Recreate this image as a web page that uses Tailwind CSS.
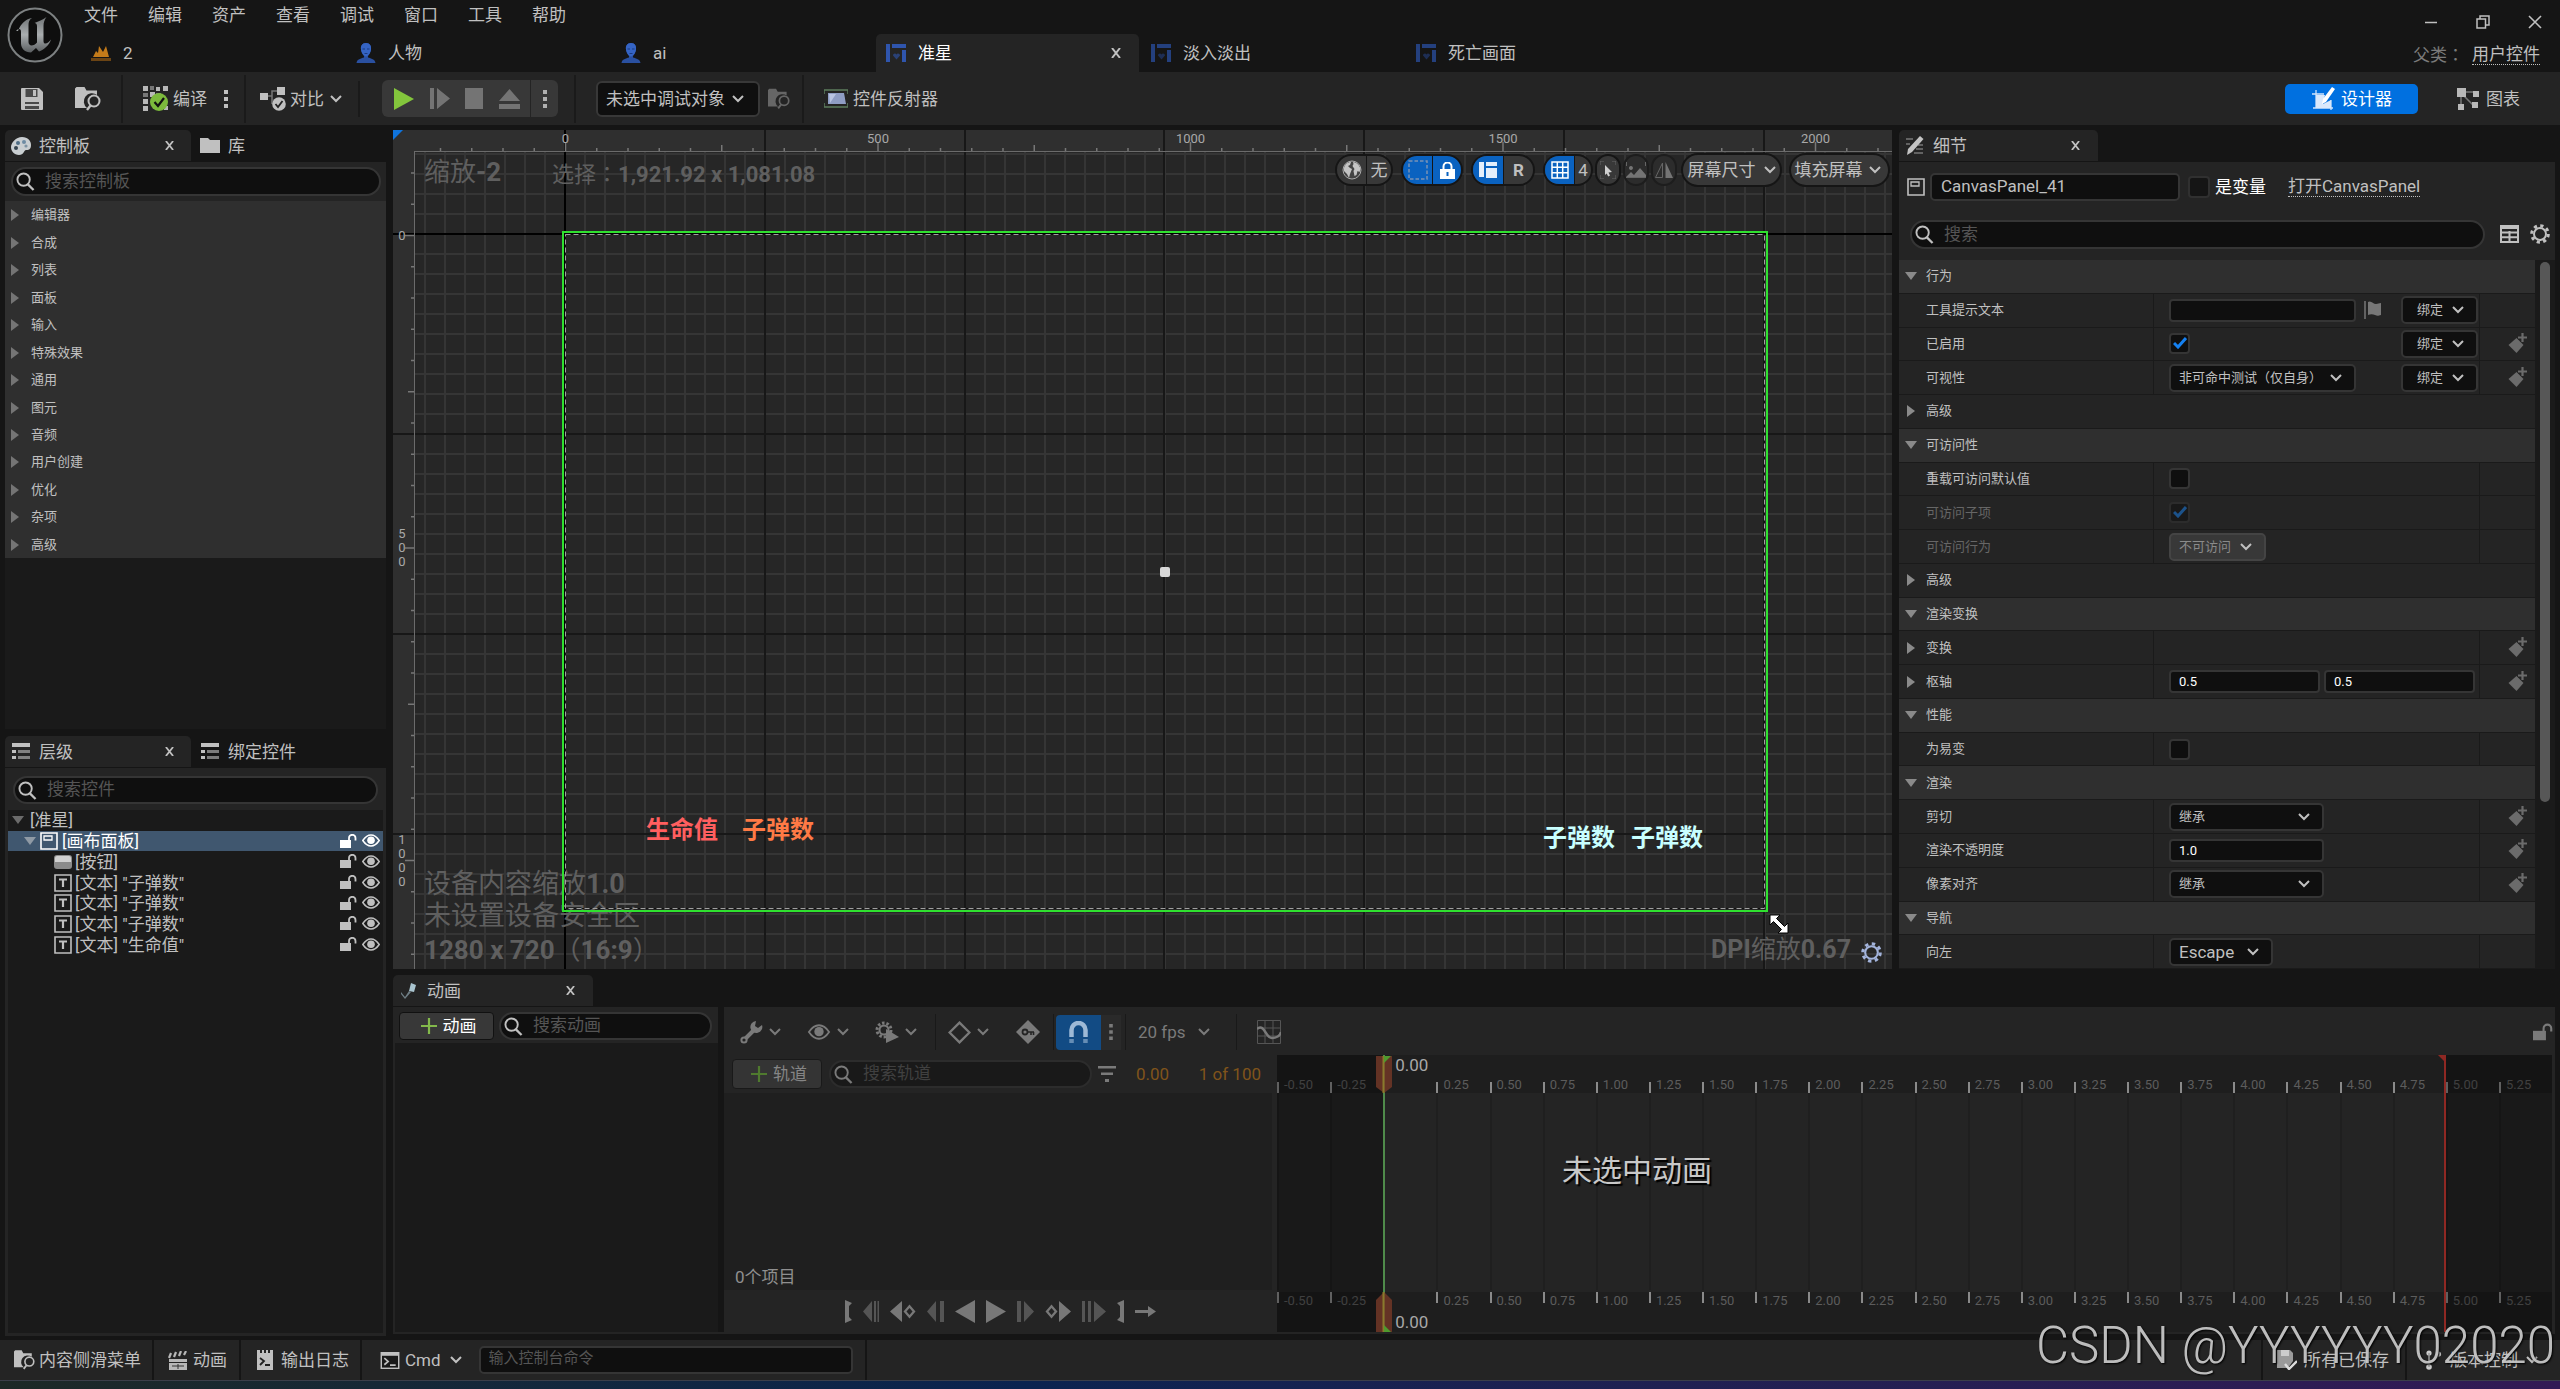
<!DOCTYPE html>
<html lang="zh-CN">
<head>
  <meta charset="UTF-8" />
  <meta name="viewport" content="width=device-width, initial-scale=1.0" />
  <title>准星 - 控件蓝图</title>
  <script src="https://cdn.jsdelivr.net/npm/@tailwindcss/browser@4"></script>
</head>
<body class="relative flex h-screen flex-col overflow-hidden bg-[#151515] font-[Roboto,'Noto_Sans_CJK_SC',sans-serif] text-[17px] leading-5 text-[#c0c0c0]">

  <!-- Icon sprite -->
  <svg class="hidden">
    <symbol id="chev" viewBox="0 0 12 8"><path d="M1 1l5 5 5-5" fill="none" stroke="currentColor" stroke-width="2" /></symbol>
    <symbol id="close" viewBox="0 0 10 10"><path d="M1 0l8 10M9 0L1 10" fill="none" stroke="currentColor" stroke-width="2" /></symbol>
    <symbol id="search" viewBox="0 0 20 20"><circle cx="8" cy="8" r="6.5" fill="none" stroke="currentColor" stroke-width="2" /><path d="M12.500 13l6 6" stroke="currentColor" stroke-width="2.400" /></symbol>
    <symbol id="dots" viewBox="0 0 4 20"><path d="M0 1h4v4H0zM0 8h4v4H0zM0 15h4v4H0z" fill="currentColor" /></symbol>
    <symbol id="right" viewBox="0 0 8 12"><path d="M0 0l8 6-8 6z" fill="currentColor" /></symbol>
    <symbol id="down" viewBox="0 0 12 8"><path d="M0 0h12L6 8z" fill="currentColor" /></symbol>
    <symbol id="person" viewBox="0 0 20 20"><path d="M10 0c4 0 5.500 3 5 6.500-.4 3-2 5.500-3 6.500v1.500c3 1 7 1.500 7.500 5.500H.5c.5-4 4.500-4.500 7.500-5.500V13C7 12 5.400 9.500 5 6.500 4.500 3 6 0 10 0z" fill="#2a50a0" /><path d="M10 0c4 0 5.500 3 5 6.500-.4 3-2.500 6.500-5 7-2.500-.5-4.600-4-5-7C4.500 3 6 0 10 0z" fill="#3564c4" /><path d="M6.500 6h2.500M11 6h2.500M8.500 10.500h3" stroke="#1b3a80" /></symbol>
    <symbol id="widget" viewBox="0 0 20 18"><path d="M0 0h4v18H0zM6 0h14v4H6zM16 6h4v12h-4z" fill="currentColor" /><path d="M10.500 15.500L7 11.500c0-2 2.500-3 3.500-1 1-2 3.500-1 3.500 1z" fill="currentColor" opacity=".6" /></symbol>
    <symbol id="browse" viewBox="0 0 26 24"><path d="M0 1.500L1.500 0h8l2 3.500H22V8a8 8 0 0 0-10 13H0z" fill="currentColor" /><circle cx="19" cy="14" r="5.500" fill="none" stroke="currentColor" stroke-width="2" /><path d="M15.500 18.500L12 23" stroke="currentColor" stroke-width="2.400" /></symbol>
    <symbol id="save" viewBox="0 0 22 22"><path d="M1 0h17l4 4v17a1 1 0 0 1-1 1H1a1 1 0 0 1-1-1V1a1 1 0 0 1 1-1z" fill="currentColor" /><path d="M4.500 1h12v8h-12zM4 14h14v7H4z" fill="#4a4a4a" /><path d="M12 2h3v6h-3z" fill="currentColor" /><path d="M4 16h14v2H4z" fill="currentColor" /></symbol>
    <symbol id="list" viewBox="0 0 18 17"><path d="M0 0h18v4H0z" fill="currentColor" /><path d="M6 7h12v3H6zM6 13h12v3H6z" fill="currentColor" opacity=".6" /><path d="M0 7h4v3H0zM0 13h4v3H0z" fill="currentColor" /></symbol>
    <symbol id="canvas" viewBox="0 0 18 18"><path d="M1 1h16v16H1z" fill="none" stroke="currentColor" stroke-width="1.600" /><path d="M4 4h8v4H4z" fill="none" stroke="currentColor" stroke-width="1.300" /></symbol>
    <symbol id="textbox" viewBox="0 0 18 18"><path d="M1 1h16v16H1z" fill="none" stroke="currentColor" stroke-width="1.600" /><path d="M5 5.500h8M9 5.500V13" stroke="currentColor" stroke-width="2.200" fill="none" /></symbol>
    <symbol id="button" viewBox="0 0 18 14"><rect width="18" height="14" rx="3" fill="#8b8b8b" /><path d="M3 1h12a2 2 0 0 1 2 2v4H1V3a2 2 0 0 1 2-2z" fill="#d0d0d0" /></symbol>
    <symbol id="unlock" viewBox="0 0 17 14"><path d="M0 6h11v8H0z" fill="currentColor" /><path d="M9 7V4a3.200 3.200 0 0 1 6.500 0v2.500" fill="none" stroke="currentColor" stroke-width="1.800" /></symbol>
    <symbol id="eye" viewBox="0 0 18 13"><path d="M.8 6.500C3.500 2.500 6 1 9 1s5.500 1.500 8.200 5.500C14.500 10.500 12 12 9 12S3.500 10.500.8 6.500z" fill="none" stroke="currentColor" stroke-width="1.500" /><circle cx="9" cy="6.200" r="3.800" fill="currentColor" /></symbol>
    <symbol id="plus" viewBox="0 0 16 16"><path d="M8 0v16M0 8h16" stroke="currentColor" stroke-width="2.200" /></symbol>
    <symbol id="gear" viewBox="0 0 20 20"><circle cx="10" cy="10" r="8.300" fill="none" stroke="currentColor" stroke-width="3" stroke-dasharray="3.200 3.320" /><circle cx="10" cy="10" r="6" fill="none" stroke="currentColor" stroke-width="2" /></symbol>
    <symbol id="key" viewBox="0 0 20 20"><path d="M8.500 5l7 7-7 8-8-8z" fill="currentColor" /><path d="M14.500 0v9M10 4.500h9" stroke="#242424" stroke-width="4.500" /><path d="M14.500 0v9M10 4.500h9" stroke="currentColor" stroke-width="2.200" /></symbol>
    <symbol id="term" viewBox="0 0 20 18"><path d="M0 0h20v18H0z" fill="currentColor" /><path d="M1.500 4h17v12.500h-17z" fill="#1a1a1a" /><path d="M4 6.500l4 3.500-4 3.500M10 14h6" fill="none" stroke="currentColor" stroke-width="1.800" /></symbol>
  </svg>

  <!-- Title bar -->
  <header class="flex h-[72px] shrink-0">
    <div class="w-[81px] shrink-0 pt-[7px] pl-[7px]">
      <svg class="size-[56px]" viewBox="0 0 56 56">
        <defs><linearGradient id="steel" x1="0" y1="0" x2="0" y2="1"><stop offset="0" stop-color="#6f7375" /><stop offset=".5" stop-color="#a9adaf" /><stop offset="1" stop-color="#5b5f61" /></linearGradient></defs>
        <circle cx="28" cy="28" r="26.500" fill="#0e0e0e" stroke="#7d8182" stroke-width="2" />
        <path d="M11 24c3-8 8-12 14-13-3 2-3.500 4-3.500 7v17c0 2 1.500 3.500 3 3.500 2 0 4-1 5.500-3V19c0-2-1-3-2.500-3 4-1.500 8-3 12-6-2 3-3 5-3 9v15c0 2 .8 2.500 2 2.500 1.500 0 3.500-1.500 5.500-4-2 6-7 10-12 12l-3-3.500-5 4.500c-6 0-10-4-10-9V25c0-2-.5-3-2-3-1 0-2 .8-3 2z" fill="url(#steel)" />
      </svg>
    </div>
    <div class="flex min-w-0 flex-1 flex-col">
      <div class="flex h-[34px] items-start pt-[5px]">
        <nav class="flex gap-[30px] pl-[3px]">
          <button>文件</button><button>编辑</button><button>资产</button><button>查看</button><button>调试</button><button>窗口</button><button>工具</button><button>帮助</button>
        </nav>
      </div>
      <div class="flex flex-1 gap-0.5">
        <button class="flex w-[263px] items-center gap-3 pl-2.5"><svg class="h-4 w-5" viewBox="0 0 20 16"><path d="M0 13h20v3H0z" fill="#6b4414" /><path d="M2 12L5 6l2 2 1-7 4 6 3-6 3 11z" fill="#c47b1a" /></svg>2</button>
        <button class="flex w-[263px] items-center gap-3 pl-2.5"><svg class="size-5"><use href="#person" /></svg>人物</button>
        <button class="flex w-[263px] items-center gap-3 pl-2.5"><svg class="size-5"><use href="#person" /></svg>ai</button>
        <div class="flex w-[263px] items-center rounded-t-[5px] bg-[#242424] pr-[18px] pl-2.5 text-white"><svg class="mr-3 h-[18px] w-5 text-[#2f55ad]"><use href="#widget" /></svg>准星<button class="ml-auto text-[#c0c0c0]" aria-label="关闭"><svg class="size-[10px]"><use href="#close" /></svg></button></div>
        <button class="flex w-[263px] items-center gap-3 pl-2.5"><svg class="h-[18px] w-5 text-[#24407e]"><use href="#widget" /></svg>淡入淡出</button>
        <button class="flex w-[263px] items-center gap-3 pl-2.5"><svg class="h-[18px] w-5 text-[#24407e]"><use href="#widget" /></svg>死亡画面</button>
      </div>
    </div>
    <div class="flex flex-col items-end pr-5">
      <div class="-mr-0.5 flex h-11 items-center gap-[38px]">
        <button aria-label="最小化"><svg class="size-[14px]" viewBox="0 0 14 14"><path d="M1 7.500h12" stroke="currentColor" stroke-width="1.500" /></svg></button>
        <button aria-label="还原"><svg class="size-[14px]" viewBox="0 0 14 14"><path d="M1 4h8.500v9H1zM4 4V1h9v9h-3" fill="none" stroke="currentColor" stroke-width="1.500" /></svg></button>
        <button aria-label="关闭窗口"><svg class="size-[14px]" viewBox="0 0 14 14"><path d="M1 1l12 12M13 1L1 13" stroke="currentColor" stroke-width="1.600" /></svg></button>
      </div>
      <div class="flex gap-2"><span class="text-[#7a7a7a]">父类<span class="font-['Noto_Sans_CJK_TC']" lang="zh-TW">：</span></span><a href="#" class="border-b border-dotted border-[#c0c0c0]">用户控件</a></div>
    </div>
  </header>

  <!-- Toolbar -->
  <div class="flex h-[53px] shrink-0 items-center bg-[#242424]">
    <button class="ml-[21px]" aria-label="保存"><svg class="size-[22px]"><use href="#save" /></svg></button>
    <button class="ml-8" aria-label="浏览"><svg class="h-6 w-[26px]"><use href="#browse" /></svg></button>
    <div class="ml-5 h-12 w-0.5 bg-[#1a1a1a]"></div>
    <button class="ml-5 flex items-center gap-1">
      <svg class="h-[25px] w-[26px]" viewBox="0 0 26 25"><path d="M0 0h5v5H0zM13 1h4v4h-4zM20 0h5v5h-5zM7 6h5v5H7zM0 13h5v5H0zM0 20h5v5H0zM21 20h4v4h-4z" fill="#b8b8b8" /><path d="M7 0h4v4H7zM0 7h5v4H0zM13 7h5v4h-5z" fill="#777" /><circle cx="16" cy="16" r="9" fill="#7cba3c" /><path d="M11.500 16l3.500 4 6-8" fill="none" stroke="#111" stroke-width="2.200" /></svg>编译</button>
    <button class="ml-[17px]" aria-label="编译选项"><svg class="h-5 w-1"><use href="#dots" /></svg></button>
    <div class="ml-4 h-12 w-0.5 bg-[#1a1a1a]"></div>
    <button class="ml-[14px] flex items-center gap-1">
      <svg class="h-6 w-[26px]" viewBox="0 0 26 24"><path d="M0 6h8v7H0zM17 0h8v8h-8z" fill="#c0c0c0" /><path d="M8 9h4V4h5M12 9v8" fill="none" stroke="#777" stroke-width="1.500" /><circle cx="19" cy="17" r="6.800" fill="#c0c0c0" /><path d="M15.500 17l2.500 3 4.500-6" fill="none" stroke="#222" stroke-width="1.800" /></svg>对比<svg class="ml-0.5 h-2 w-3"><use href="#chev" /></svg></button>
    <div class="ml-4 h-9 w-0.5 bg-[#1a1a1a]"></div>
    <div class="ml-[22px] flex h-[37px] w-44 items-center rounded-md bg-[#383838] pl-3 text-[#747474]">
      <button aria-label="播放"><svg class="h-[22px] w-5" viewBox="0 0 20 22"><path d="M0 0l20 11L0 22z" fill="#83c63c" /></svg></button>
      <button class="ml-4" aria-label="步进"><svg class="h-[21px] w-5" viewBox="0 0 20 21"><path d="M0 0h4v21H0zM7 0l13 10.500L7 21z" fill="currentColor" /></svg></button>
      <button class="ml-[15px]" aria-label="停止"><svg class="h-[21px] w-[18px]"><rect width="18" height="21" fill="currentColor" /></svg></button>
      <button class="ml-4" aria-label="弹出"><svg class="h-5 w-[21px]" viewBox="0 0 21 20"><path d="M10.500 0L21 12H0zM0 15h21v5H0z" fill="currentColor" /></svg></button>
      <div class="ml-2.5 h-full w-px bg-[#242424]"></div>
      <button class="ml-3 text-[#b0b0b0]" aria-label="播放选项"><svg class="h-5 w-1"><use href="#dots" /></svg></button>
    </div>
    <div class="ml-4 h-12 w-0.5 bg-[#1a1a1a]"></div>
    <div class="relative ml-5 w-[164px]">
      <select class="h-9 w-full appearance-none rounded-md border-2 border-[#383838] bg-[#0f0f0f] pl-2" aria-label="调试对象"><option>未选中调试对象</option></select>
      <svg class="pointer-events-none absolute top-3.5 right-4 h-2 w-3"><use href="#chev" /></svg>
    </div>
    <button class="ml-2 text-[#666]" aria-label="浏览调试对象"><svg class="h-[22px] w-[22px]"><use href="#browse" /></svg></button>
    <div class="ml-3 h-12 w-0.5 bg-[#1a1a1a]"></div>
    <button class="ml-5 flex items-center gap-[5px]">
      <svg class="h-5 w-6" viewBox="0 0 24 20"><path d="M4 4h16l2 11H4z" fill="#8f9dc4" /><path d="M5 5h7l-6 9z" fill="#b9c4e2" /><path d="M0 5V1h5M19 1h5v4M0 14v4h5M19 18h5v-4M5 1h14M5 18h14" fill="none" stroke="#5c7c5c" stroke-width="1.500" /></svg>控件反射器</button>
    <button class="ml-auto flex h-[30px] w-[133px] items-center justify-center gap-[5px] rounded-[5px] bg-[#0070e0] text-white">
      <svg class="h-6 w-[25px]" viewBox="0 0 25 24"><path d="M5 3v18M1 7h12M2 21h20M20 13v10" stroke="#cfe3fb" stroke-width="1.300" /><path d="M5 8h9l-2 9 8-4v8H5z" fill="#d9e8fb" /><path d="M21 0l3 2-9 13-4 2 1-5z" fill="#fff" /></svg>设计器</button>
    <button class="mr-10 ml-[38px] flex items-center gap-[7px]">
      <svg class="h-[22px] w-[23px]" viewBox="0 0 23 22"><path d="M6 4h12M5 6v13M6 6l12 12" stroke="#777" stroke-width="1.500" /><path d="M1 0h9v9H1zM17 3h6v6h-6zM2 16h6v6H2zM16 14h6v6h-6z" fill="#b8b8b8" /></svg>图表</button>
  </div>

  <!-- Work area -->
  <main class="flex min-h-0 flex-1 gap-[7px] px-[5px] pt-[5px]">

    <!-- Palette and hierarchy -->
    <aside class="flex w-[381px] shrink-0 flex-col pb-1">
      <section class="flex h-[599px] shrink-0 flex-col">
        <div class="flex h-[31px]">
          <div class="flex w-[186px] items-center rounded-t-[5px] bg-[#242424] pr-[17px] pl-1.5">
            <svg class="mr-2 h-[18px] w-5" viewBox="0 0 20 18"><path d="M11 0c6 0 9 4 9 8 0 5-3 5-5 5s-2 5-7 5-8-4-8-8S5 0 11 0z" fill="#c9ced1" /><circle cx="7" cy="6" r="2" fill="#4f6d86" /><circle cx="13" cy="5" r="2" fill="#6d8ba3" /><circle cx="5" cy="11" r="2" fill="#33434f" /><circle cx="15" cy="9" r="1.600" fill="#7d93a3" /></svg>控制板
            <button class="ml-auto" aria-label="关闭"><svg class="size-[9px]"><use href="#close" /></svg></button>
          </div>
          <button class="ml-[9px] flex items-center gap-2"><svg class="h-[15px] w-5" viewBox="0 0 20 15"><path d="M0 0h8l2 2h10v13H0z" fill="#c0c0c0" /></svg>库</button>
        </div>
        <div class="mt-px flex-1 bg-[#1a1a1a]">
          <div class="h-[39px] bg-[#242424] pt-[5px] pr-[5px] pl-1.5">
            <label class="flex h-[29px] items-center rounded-full border-2 border-[#353535] bg-[#0f0f0f] pl-[3px]"><svg class="mr-2.5 size-[19px] shrink-0"><use href="#search" /></svg><input class="w-full pb-0.5 placeholder-[#555] outline-none" placeholder="搜索控制板" aria-label="搜索控制板" /></label>
          </div>
          <ul id="palette" class="flex h-[357px] flex-col bg-[#2f2f2f] text-[13px]"></ul>
        </div>
      </section>
      <section class="mt-[7px] flex min-h-0 flex-1 flex-col">
        <div class="flex h-[31px]">
          <div class="flex w-[186px] items-center rounded-t-[5px] bg-[#242424] pr-[17px] pl-[7px]"><svg class="mr-[9px] h-[17px] w-[18px]"><use href="#list" /></svg>层级
            <button class="ml-auto" aria-label="关闭"><svg class="size-[9px]"><use href="#close" /></svg></button>
          </div>
          <button class="ml-2.5 flex items-center gap-[9px]"><svg class="h-[17px] w-[18px]"><use href="#list" /></svg>绑定控件</button>
        </div>
        <div class="mt-px flex flex-1 flex-col border-[3px] border-t-0 border-[#242424] bg-[#1a1a1a]">
          <div class="h-[42px] bg-[#242424] px-[5px] pt-2">
            <label class="flex h-7 items-center rounded-full border-2 border-[#353535] bg-[#0f0f0f] pl-[3px]"><svg class="mr-2.5 size-[19px] shrink-0"><use href="#search" /></svg><input class="w-full pb-0.5 placeholder-[#555] outline-none" placeholder="搜索控件" aria-label="搜索控件" /></label>
          </div>
          <ul id="hierarchy" class="flex h-[145px] flex-col"></ul>
        </div>
      </section>
    </aside>

    <div class="flex min-w-0 flex-1 flex-col gap-1.5 pb-1.5">
      <div class="flex min-h-0 flex-1 gap-[7px]">

        <!-- Designer viewport -->
        <section class="relative min-w-0 flex-1 overflow-hidden bg-[#262626]">
          <svg class="absolute inset-0 h-full w-full">
            <defs><pattern id="grid" x="11" y="3" width="20" height="20" patternUnits="userSpaceOnUse"><path d="M0 1h20M1 0v20" stroke="#353535" stroke-width="2" /></pattern></defs>
            <rect width="100%" height="100%" fill="url(#grid)" />
            <path d="M0 0h4000v21H21v4000H0z" fill="#2f2f2f" />
            <path d="M372 0v2000M572 0v2000M771 0v2000M971 0v2000M1171 0v2000M1371 0v2000M0 304h4000M0 504h4000M0 704h4000" stroke="#171717" stroke-width="2" />
            <path d="M172 0v2000M0 104h4000" stroke="#000" stroke-width="2" />
            <path d="M21 21.500h4000M21.500 21v4000" stroke="#6b6b6b" />
            <path id="ticks" stroke="#777" stroke-width="1.500" fill="none" />
            <path d="M0 0h10L0 10z" fill="#0f74dd" />
            <g id="rulerLabels" class="fill-[#a8a8a8] text-[13px]" text-anchor="middle"></g>
          </svg>
          <p class="absolute top-[25px] left-[31px] text-[26px] leading-[34px] text-[#5f5f5f]">缩放<span class="font-bold">-2</span></p>
          <p class="absolute top-[25px] left-[159px] text-[22px] leading-[34px] text-[#5f5f5f]">选择<span class="font-['Noto_Sans_CJK_TC']" lang="zh-TW">：</span><span class="font-bold">1,921.92 x 1,081.08</span></p>
          <div class="absolute bottom-[3px] left-[31px] text-[27px] leading-8 text-[#5f5f5f]">
            <p>设备内容缩放<span class="font-bold">1.0</span></p>
            <p>未设置设备安全区</p>
            <p class="text-[26px] font-bold">1280 x 720<span class="font-['Noto_Sans_CJK_TC'] font-normal" lang="zh-TW">（</span>16:9<span class="font-['Noto_Sans_CJK_TC'] font-normal" lang="zh-TW">）</span></p>
          </div>
          <p class="absolute right-[41px] bottom-[3px] text-[25px] leading-8 text-[#5f5f5f]"><span class="font-bold">DPI</span>缩放<span class="font-bold">0.67</span></p>
          <svg class="absolute right-2.5 bottom-1.5 size-[21px] text-[#a3b4dc]"><use href="#gear" /></svg>
          <svg class="absolute inset-0 h-full w-full">
            <rect x="170" y="102" width="1204" height="679" fill="none" stroke="#2fe02f" stroke-width="2" />
            <rect x="172.500" y="104.500" width="1199" height="674" fill="none" stroke="#111" />
            <rect x="172.500" y="104.500" width="1199" height="674" fill="none" stroke="#a0a0a0" stroke-dasharray="5 3" />
            <rect x="767" y="437" width="10" height="10" rx="2" fill="#d8d8d8" />
            <path d="M1377 785h10l-3.500 3.500 8 8 3.500-3.500v10h-10l3.500-3.500-8-8-3.500 3.500z" fill="#fff" stroke="#000" />
          </svg>
          <span class="absolute top-[684px] left-[253px] text-2xl leading-8 font-bold text-[#ff5f5f]">生命值</span>
          <span class="absolute top-[684px] left-[349px] text-2xl leading-8 font-bold text-[#ff7a45]">子弹数</span>
          <span class="absolute top-[692px] left-[1150px] text-2xl leading-8 font-bold text-[#c8ffff]">子弹数</span>
          <span class="absolute top-[692px] left-[1238px] text-2xl leading-8 font-bold text-[#c8ffff]">子弹数</span>

          <!-- Viewport controls -->
          <div class="absolute top-[23px] right-0.5 flex h-[34px] items-center">
            <div class="mr-2 flex h-8 w-[58px] overflow-hidden rounded-full border-2 border-[#151515] bg-[#383838]">
              <button class="flex w-[30px] items-center justify-center border-r border-[#151515]" aria-label="本地化"><svg class="size-5" viewBox="0 0 20 20"><circle cx="10" cy="10" r="9" fill="#444" stroke="#aaa" /><path d="M2 8c1-4 4-6 7-6l-1 3-2 1 2 2 2 1-2 5-1 4-2-4-3-3zM11 2c4 0 7 4 7.500 7l-1 3-2-1-1 4-2 1-1-5 1-2-2-3 1-2z" fill="#c4c4c4" /></svg></button>
              <button class="flex-1">无</button>
            </div>
            <div class="mr-2 flex h-8 w-[62px] overflow-hidden rounded-full border-2 border-[#151515] bg-[#0a62c0] text-white">
              <button class="flex w-[30px] items-center justify-center border-r border-[#151515]" aria-label="虚线轮廓"><svg class="size-5" viewBox="0 0 20 20"><path d="M1 1h18v18H1z" fill="none" stroke="#7a93b5" stroke-width="1.500" stroke-dasharray="3.500 2" /></svg></button>
              <button class="flex flex-1 items-center justify-center" aria-label="锁定"><svg class="h-[17px] w-[15px]" viewBox="0 0 15 17"><path d="M0 7h15v10H0z" fill="#fff" /><path d="M3.500 8V4.500a4 4 0 0 1 8 0V8" fill="none" stroke="#fff" stroke-width="2" /><path d="M7.500 10v4" stroke="#0a62c0" stroke-width="2" /></svg></button>
            </div>
            <div class="mr-2 flex h-8 w-16 overflow-hidden rounded-full border-2 border-[#151515] bg-[#383838]">
              <button class="flex w-[31px] items-center justify-center border-r border-[#151515] bg-[#0a62c0]" aria-label="布局"><svg class="h-4 w-[18px]" viewBox="0 0 18 16"><path d="M0 0h5v15H0zM7 0h11v4H7zM7 6h11v10H7z" fill="#e4eefb" /></svg></button>
              <button class="flex-1 font-bold">R</button>
            </div>
            <div class="mr-0.5 flex h-8 w-[50px] overflow-hidden rounded-full border-2 border-[#151515] bg-[#383838]">
              <button class="flex w-[30px] items-center justify-center border-r border-[#151515] bg-[#0a62c0]" aria-label="网格"><svg class="size-[18px]" viewBox="0 0 18 18"><path d="M1 1h16v16H1zM6.300 1v16M11.700 1v16M1 6.300h16M1 11.700h16" fill="none" stroke="#fff" stroke-width="1.500" /></svg></button>
              <button class="flex-1">4</button>
            </div>
            <button class="mr-0.5 flex h-8 w-[26px] items-center justify-center rounded-full border-2 border-[#151515] bg-[#383838]" aria-label="选择"><svg class="h-[18px] w-4" viewBox="0 0 16 18"><path d="M0 4V0h4M12 0h4v4M0 14v4h4M12 18h4v-4" fill="none" stroke="#666" /><path d="M5 4l7 7-3.500.5 1.500 3-1.800 1-1.500-3L5 14z" fill="#d0d0d0" /></svg></button>
            <button class="mr-0.5 flex h-8 w-[26px] items-center justify-center rounded-full border-2 border-[#1d1d1d] bg-[#2c2c2c]" aria-label="背景"><svg class="h-4 w-5" viewBox="0 0 20 16"><path d="M0 15l5-5 3 3 6-7 6 7v2zM5 4a2 2 0 1 1-.1 0z" fill="#747474" /><path d="M.5 4V0M19.500 4V0M0 15.500h20" stroke="#666" /></svg></button>
            <button class="mr-1 flex h-8 w-[26px] items-center justify-center rounded-full border-2 border-[#1d1d1d] bg-[#2c2c2c]" aria-label="翻转"><svg class="h-4 w-[18px]" viewBox="0 0 18 16"><path d="M7.500 1v14.500H.5z" fill="none" stroke="#666" /><path d="M10.500 0L18 16h-7.500z" fill="#747474" /></svg></button>
            <button class="mr-[7px] flex h-[34px] w-[101px] items-center justify-center gap-2 rounded-full border-2 border-[#151515] bg-[#383838]">屏幕尺寸<svg class="h-2 w-3"><use href="#chev" /></svg></button>
            <button class="flex h-[34px] w-[101px] items-center justify-center gap-1.5 rounded-full border-2 border-[#151515] bg-[#383838] pr-1">填充屏幕<svg class="h-2 w-3"><use href="#chev" /></svg></button>
          </div>
        </section>

        <!-- Details -->
        <aside class="flex w-[656px] shrink-0 flex-col">
          <div class="flex h-[31px] w-[199px] shrink-0 items-center rounded-t-[5px] bg-[#242424] pr-[18px] pl-1.5">
            <svg class="mr-[9px] h-5 w-[19px]" viewBox="0 0 19 20"><path d="M1 3h7M1 8h4M13 9h5M11 13h7M9 17h9" stroke="#777" stroke-width="1.500" /><path d="M15 0l3.500 3L7 16l-5 3 1-6z" fill="#c4c4c4" /></svg>细节
            <button class="ml-auto" aria-label="关闭"><svg class="size-[9px]"><use href="#close" /></svg></button>
          </div>
          <div class="mt-px flex min-h-0 flex-1 flex-col bg-[#242424]">
            <div class="flex h-[49px] items-center pl-2">
              <svg class="mr-[5px] size-[18px]"><use href="#canvas" /></svg>
              <input class="h-7 w-[250px] rounded-[5px] border-2 border-[#353535] bg-[#0f0f0f] pb-0.5 pl-[9px]" value="CanvasPanel_41" aria-label="名称" />
              <input id="isVar" type="checkbox" class="ml-2 size-[22px] appearance-none rounded-[4px] border-2 border-[#303030] bg-[#151515]" />
              <label for="isVar" class="ml-[5px] text-white">是变量</label>
              <a href="#" class="ml-[22px] border-b border-dotted border-[#c0c0c0]">打开CanvasPanel</a>
            </div>
            <div class="flex h-[49px] items-center gap-[15px] pr-[5px] pb-[3px] pl-[11px]">
              <label class="flex h-[29px] flex-1 items-center rounded-full border-2 border-[#353535] bg-[#0f0f0f] pl-[3px]"><svg class="mr-2.5 size-[19px] shrink-0"><use href="#search" /></svg><input class="w-full placeholder-[#555] outline-none" placeholder="搜索" aria-label="搜索细节" /></label>
              <button aria-label="属性矩阵"><svg class="h-[18px] w-[19px]" viewBox="0 0 19 18"><path d="M1 1h17v16H1zM1 3h17M1 7.500h17M1 12.200h17M9.500 6v11" fill="none" stroke="currentColor" stroke-width="2" /></svg></button>
              <button class="-ml-1" aria-label="设置"><svg class="size-5"><use href="#gear" /></svg></button>
            </div>
            <div class="flex min-h-0 flex-1 bg-[#1a1a1a]">
              <div id="details" class="flex min-w-0 flex-1 flex-col text-[13px]"></div>
              <div class="w-5 pt-0.5 pl-[5px]"><div class="h-[540px] w-[10px] rounded-full bg-[#575757]"></div></div>
            </div>
          </div>
        </aside>
      </div>

      <!-- Animation panel -->
      <section class="flex h-[359px] shrink-0 flex-col">
        <div class="flex h-[31px] w-[200px] items-center rounded-t-[5px] bg-[#242424] pr-[18px] pl-2">
          <svg class="mr-2.5 h-4 w-4" viewBox="0 0 16 16"><path d="M10 0l5 2-2 7-5-1z" fill="#a9c4cf" /><path d="M0 9l4 5 4-6 2 1-6 7L0 11z" fill="#6f7e85" /></svg>动画
          <button class="ml-auto" aria-label="关闭"><svg class="size-[9px]"><use href="#close" /></svg></button>
        </div>
        <div class="mt-px flex min-h-0 flex-1 border-2 border-t-0 border-[#242424] bg-[#242424]">
          <div class="flex w-[323px] shrink-0 flex-col">
            <div class="flex h-9 gap-[5px] pt-[5px] pr-1.5 pl-1">
              <button class="flex h-7 w-[95px] items-center justify-center gap-1.5 rounded-[4px] border border-[#111] bg-[#383838] pl-1 text-white"><svg class="size-4 text-[#83b94b]"><use href="#plus" /></svg>动画</button>
              <label class="flex h-7 flex-1 items-center rounded-full border-2 border-[#353535] bg-[#0f0f0f] pl-[3px]"><svg class="mr-2.5 size-[19px] shrink-0"><use href="#search" /></svg><input class="w-full pb-0.5 placeholder-[#555] outline-none" placeholder="搜索动画" aria-label="搜索动画" /></label>
            </div>
            <div class="flex-1 bg-[#1a1a1a]"></div>
          </div>
          <div class="w-1.5 bg-[#151515]"></div>
          <div class="flex min-w-0 flex-1 flex-col text-[#7a7a7a]">
            <!-- Sequencer toolbar -->
            <div class="flex h-12 items-center pt-0.5 pl-4">
              <button class="flex items-center gap-[5px]" aria-label="操作"><svg class="h-6 w-6" viewBox="0 0 24 24"><path d="M4 20L15 9" stroke="currentColor" stroke-width="4" /><path d="M22 5a6 6 0 1 1-6-4l-1 5 3 2z" fill="currentColor" /><circle cx="4" cy="20" r="2.600" fill="#242424" stroke="currentColor" stroke-width="2" /></svg><svg class="h-2 w-3"><use href="#chev" /></svg></button>
              <button class="ml-[26px] flex items-center gap-1.5" aria-label="视图"><svg class="h-4 w-6"><use href="#eye" /></svg><svg class="h-2 w-3"><use href="#chev" /></svg></button>
              <button class="ml-[26px] flex items-center gap-1.5" aria-label="播放选项"><svg class="h-[22px] w-6" viewBox="0 0 24 22"><circle cx="9" cy="9" r="7" fill="none" stroke="currentColor" stroke-width="3" stroke-dasharray="2.500 1.900" /><circle cx="9" cy="9" r="4.500" fill="none" stroke="currentColor" stroke-width="2" /><path d="M11 8l13 8-13 6z" fill="currentColor" /></svg><svg class="h-2 w-3"><use href="#chev" /></svg></button>
              <div class="ml-[18px] h-9 w-px bg-[#191919]"></div>
              <button class="ml-3 flex items-center gap-1.5" aria-label="关键帧"><svg class="size-[23px]" viewBox="0 0 22 22"><path d="M11 1.500l9.500 9.500-9.500 9.500L1.500 11z" fill="none" stroke="currentColor" stroke-width="2.200" /></svg><svg class="h-2 w-3"><use href="#chev" /></svg></button>
              <button class="ml-[27px]" aria-label="自动关键帧"><svg class="size-6" viewBox="0 0 24 24"><path d="M12 0l12 12-12 12L0 12z" fill="currentColor" /><circle cx="9" cy="12" r="2.500" fill="none" stroke="#242424" stroke-width="1.800" /><path d="M11 12h7M15 12v3M17.500 12v3" stroke="#242424" stroke-width="1.600" /></svg></button>
              <div class="ml-[13px] h-9 w-px bg-[#191919]"></div>
              <button class="ml-0.5 flex h-[35px] w-[45px] items-center justify-center rounded-l-[4px] bg-[#124b84] text-[#9db9d6]" aria-label="对齐"><svg class="h-[22px] w-[19px]" viewBox="0 0 19 22"><path d="M2.500 16V9a7 7 0 0 1 14 0v7" fill="none" stroke="currentColor" stroke-width="4.500" /><path d="M.3 18h4.500v4H.3zM14.200 18h4.500v4h-4.500z" fill="currentColor" opacity=".6" /></svg></button>
              <button class="flex h-[35px] w-5 items-center justify-center bg-[#2a2a2a]" aria-label="对齐选项"><svg class="h-[18px] w-1"><use href="#dots" /></svg></button>
              <div class="ml-1 h-9 w-px bg-[#191919]"></div>
              <button class="ml-3 flex items-center gap-3">20 fps<svg class="h-2 w-3"><use href="#chev" /></svg></button>
              <div class="ml-[26px] h-9 w-px bg-[#191919]"></div>
              <button class="ml-5" aria-label="曲线编辑器"><svg class="size-6" viewBox="0 0 24 24"><path d="M.5.500h23v23H.5zM8 0v24M16 0v24M0 8h24M0 16h24" fill="none" stroke="#555" /><path d="M0 9c8-6 8 9 15 9 4 0 8-2 9-6" fill="none" stroke="currentColor" stroke-width="2.500" /></svg></button>
              <button class="ml-auto" aria-label="解锁"><svg class="h-[18px] w-5"><use href="#unlock" /></svg></button>
            </div>
            <div class="flex min-h-0 flex-1">
              <!-- Track list -->
              <div class="flex w-[548px] shrink-0 flex-col">
                <div class="flex h-[38px] items-center pl-2">
                  <button class="flex h-[30px] w-[90px] items-center justify-center gap-1.5 rounded-[4px] border border-[#191919] bg-[#343434] pl-1 text-[#858585]"><svg class="size-4 text-[#4f7a2e]"><use href="#plus" /></svg>轨道</button>
                  <label class="ml-[7px] flex h-7 w-[263px] items-center rounded-full border-2 border-[#2c2c2c] bg-[#191919] pl-[3px]"><svg class="mr-2.5 size-[19px] shrink-0"><use href="#search" /></svg><input class="w-full pb-0.5 placeholder-[#404040] outline-none" placeholder="搜索轨道" aria-label="搜索轨道" /></label>
                  <button class="ml-1.5" aria-label="筛选"><svg class="h-4 w-[18px]" viewBox="0 0 18 16"><path d="M0 0h18v2.500H0zM3 6.500h12V9H3zM7 13h4v3H7z" fill="currentColor" /></svg></button>
                  <span class="ml-5 text-[#80541b]">0.00</span>
                  <span class="ml-auto pr-[11px] text-[#80541b]">1 of 100</span>
                </div>
                <div class="flex flex-1 items-end bg-[#1f1f1f] pb-[3px] pl-[11px] text-[#8f8f8f]">0个项目</div>
                <div id="transport" class="flex h-[42px] items-center justify-center gap-[11px] pl-1 text-[#787878]"></div>
              </div>
              <!-- Timeline -->
              <div class="relative mr-px ml-[5px] flex flex-1 flex-col bg-[#242424]">
                <div class="flex h-[38px] items-end bg-[#1e1e1e]" data-ticks></div>
                <div class="flex flex-1" data-lines></div>
                <div class="mt-0.5 flex h-10 items-start bg-[#1e1e1e]" data-ticks></div>
                <div class="absolute inset-y-0 left-0 w-2/24 bg-black/30"></div>
                <div class="absolute inset-y-0 right-0 w-2/24 bg-black/30"></div>
                <div class="absolute inset-y-0 right-2/24 w-0.5 bg-[#8f2823]"></div>
                <div class="absolute inset-y-0 left-2/24 w-0.5 bg-[#4f8a4a]"></div>
                <svg class="absolute top-px left-2/24 -ml-[7px] h-[37px] w-4" viewBox="0 0 16 37"><path d="M0 0h16v31l-8 6-8-6z" fill="#6b3526" opacity=".9" /><path d="M7.500 0v37" stroke="#8a7a2c" stroke-width="2" /><path d="M8 0h7L8 7z" fill="#4f9a2e" /></svg>
                <svg class="absolute bottom-0 left-2/24 -ml-[7px] h-10 w-4" viewBox="0 0 16 40"><path d="M8 0l8 8v32H0V8z" fill="#6b3526" opacity=".9" /><path d="M7.500 0v40" stroke="#8a7a2c" stroke-width="2" /><path d="M8 33l7 7H8z" fill="#4f9a2e" /></svg>
                <svg class="absolute top-0 right-2/24 size-2" viewBox="0 0 8 8"><path d="M0 0h8v8z" fill="#8f2823" /></svg>
                <span class="absolute top-0 left-2/24 ml-3 text-[#a8a8a8]">0.00</span>
                <span class="absolute bottom-0 left-2/24 ml-3 text-[#a8a8a8]">0.00</span>
                <p class="absolute top-24 left-0 w-[720px] text-center text-3xl leading-10 text-[#c8c8c8] [text-shadow:2px_2px_1px_#000]">未选中动画</p>
              </div>
            </div>
          </div>
        </div>
      </section>
    </div>
  </main>

  <!-- Status bar -->
  <footer class="flex h-10 shrink-0 items-center bg-[#242424]">
    <button class="flex h-full w-[154px] items-center gap-1 border-r-2 border-[#151515] pl-[14px]"><svg class="h-5 w-[21px]"><use href="#browse" /></svg>内容侧滑菜单</button>
    <button class="flex h-full w-[87px] items-center gap-[5px] border-r-2 border-[#151515] pl-[14px]"><svg class="h-[19px] w-5" viewBox="0 0 20 19"><path d="M1 8h18v3H1zM1 12h18v7H1z" fill="#b8b8b8" /><path d="M1 7l2-5M6 6l2-5M11 5l2-5M16 4l2-4" stroke="#b8b8b8" stroke-width="2.200" /><path d="M10 13v5M4 15h12" stroke="#333" /></svg>动画</button>
    <button class="flex h-full w-[121px] items-center gap-2 border-r-2 border-[#151515] pl-4"><svg class="h-5 w-4" viewBox="0 0 16 20"><path d="M0 0h3v3h2V0h2v3h2V0h2v3h2V0h3v20H0z" fill="#c0c0c0" /><path d="M3 8l4 3-4 4M8 15h5" fill="none" stroke="#222" stroke-width="1.800" /></svg>输出日志</button>
    <button class="ml-[18px] flex items-center gap-[5px]"><svg class="h-[17px] w-5"><use href="#term" /></svg>Cmd<svg class="ml-1 h-2 w-3"><use href="#chev" /></svg></button>
    <input class="ml-[17px] h-7 w-[374px] rounded-[5px] border-2 border-[#353535] bg-[#0f0f0f] pb-1 pl-2 text-[15px] placeholder-[#555]" placeholder="输入控制台命令" aria-label="控制台命令" />
    <div class="ml-3 h-full w-0.5 bg-[#151515]"></div>
    <button class="ml-auto flex h-full w-[146px] items-center gap-[7px] border-x-2 border-[#151515] pl-[14px]"><svg class="size-5" viewBox="0 0 20 20"><path d="M0 0h13l3 3v8l-5 7H0z" fill="#9a9a9a" /><path d="M4 0h8v6H4z" fill="#ccc" /><path d="M8 14l4 5 8-8" fill="none" stroke="#ddd" stroke-width="2.400" /></svg>所有已保存</button>
    <button class="mr-[22px] ml-[19px] flex items-center gap-2"><svg class="h-5 w-4" viewBox="0 0 16 20"><circle cx="3" cy="3" r="2.600" fill="#ccc" /><circle cx="12.500" cy="4" r="2.600" fill="#ccc" /><circle cx="3" cy="17" r="2.800" fill="#ccc" /><path d="M3 3v14M3 11c6 0 9-2 9.500-7" fill="none" stroke="#999" stroke-width="1.500" /></svg>版本控制<svg class="h-2 w-3"><use href="#chev" /></svg></button>
  </footer>
  <div class="h-[9px] shrink-0 border-t border-[#3b3f4a] bg-linear-to-r from-[#1d2926] via-[#0a2350] via-40% to-[#321a55]"></div>

  <div class="pointer-events-none absolute right-[5px] bottom-[14px] text-[51px] leading-[58px] font-light text-[#d0d0d0]/90 [text-shadow:1px_1px_2px_#000]">CSDN @YYYYYY02020</div>

  <script>
    const icon = (name, cls) => `<svg class="${cls}"><use href="#${name}" /></svg>`;

    // Palette categories
    const categories = ["编辑器", "合成", "列表", "面板", "输入", "特殊效果", "通用", "图元", "音频", "用户创建", "优化", "杂项", "高级"];
    document.getElementById("palette").innerHTML = categories.map(name => `
      <li class="flex flex-1 items-center gap-3 pt-px pl-1.5">${icon("right", "h-3 w-2 text-[#747474]")}${name}</li>`).join("");

    // Widget hierarchy
    const eyeLock = `<span class="mr-[3px] ml-auto flex items-center gap-[5px] pb-px">${icon("unlock", "h-[14px] w-[17px]")}${icon("eye", "h-[13px] w-[18px]")}</span>`;
    const children = [["button", "h-[14px] w-[18px]", "[按钮]"]].concat(['"子弹数"', '"子弹数"', '"子弹数"', '"生命值"'].map(t => ["textbox", "size-[18px]", "[文本] " + t]));
    document.getElementById("hierarchy").innerHTML = `
      <li class="flex flex-1 items-center gap-1.5 pl-1">${icon("down", "h-2 w-3 text-[#6b6b6b]")}[准星]</li>
      <li class="flex flex-1 items-center gap-1 bg-[#40576f] pl-4 text-white">${icon("down", "h-2 w-3 text-[#8f9aa5]")}${icon("canvas", "size-[18px]")}[画布面板]${eyeLock}</li>` +
      children.map(([name, size, text]) => `
      <li class="flex flex-1 items-center gap-[3px] pl-[46px]">${icon(name, size)}${text}${eyeLock}</li>`).join("");

    // Rulers: one major tick every 500 units, ten small steps between
    const step = 31.25;
    let d = "";
    let labels = "";
    for (let i = -4; i <= 42; i++) {
      const len = i % 10 === 0 ? 9 : i % 5 === 0 ? 6 : 3;
      const x = 172.5 + i * step;
      const y = 105.5 + i * step;
      if (x > 22) d += `M${x} ${21 - len}V21`;
      if (y > 22 && y < 839) d += `M${21 - len} ${y}H21`;
      if (i >= 0 && i % 10 === 0) {
        labels += `<text x="${x}" y="13">${i * 50}</text>`;
        if (y < 839) {
          const digits = String(i * 50).split("");
          digits.forEach((c, k) => {
            labels += `<text x="9" y="${Math.round(y + 4 + (k - (digits.length - 1) / 2) * 14)}">${c}</text>`;
          });
        }
      }
    }
    document.getElementById("ticks").setAttribute("d", d);
    document.getElementById("rulerLabels").innerHTML = labels;

    // Details rows
    let uid = 0;
    const header = text => `<h3 class="flex flex-1 items-center gap-[9px] border-b border-[#1a1a1a] bg-[#2f2f2f] pl-1.5">${icon("down", "h-2 w-3 text-[#8a8a8a]")}${text}</h3>`;
    const advanced = () => `<div class="flex flex-1 items-center gap-[11px] border-b border-[#1a1a1a] bg-[#242424] pl-2">${icon("right", "h-3 w-2 text-[#8a8a8a]")}高级</div>`;
    const select = (text, width, look = "border-[#353535] bg-[#0f0f0f] text-[13px]", id = "") => `
      <span class="relative ${width}">
        <select ${id ? `id="${id}"` : `aria-label="${text}"`} class="block h-7 w-full appearance-none rounded-[5px] border-2 ${look} pl-2"><option>${text}</option></select>
        ${icon("chev", "pointer-events-none absolute top-2.5 right-3.5 h-2 w-3")}
      </span>`;
    const check = (id, on, dim) => `
      <span class="relative size-[21px] ${dim ? "opacity-50" : ""}">
        <input id="${id}" type="checkbox" ${on ? "checked" : ""} ${dim ? "disabled" : ""} class="block size-[21px] appearance-none rounded-[4px] border-2 border-[#353535] bg-[#0f0f0f]" />
        ${on ? `<svg class="pointer-events-none absolute top-1 left-1 h-3 w-3.5" viewBox="0 0 14 12"><path d="M1 6l4 4 8-9" fill="none" stroke="#1580f0" stroke-width="3" /></svg>` : ""}
      </span>`;
    const box = (id, value, width) => `<input id="${id}" aria-label="数值" class="h-[23px] ${width} rounded-[4px] border-2 border-[#353535] bg-[#0f0f0f] pl-2 text-white" value="${value}" />`;
    const row = (label, value, o = {}) => {
      const id = "prop" + uid++;
      return `
      <div class="flex min-h-0 flex-1 border-b border-[#1a1a1a] bg-[#242424]">
        <div class="flex w-[255px] shrink-0 items-center gap-[11px] border-r border-[#1a1a1a] ${o.arrow ? "pl-2" : "pl-[27px]"} ${o.dim ? "text-[#666]" : ""}">${o.arrow ? icon("right", "h-3 w-2 text-[#8a8a8a]") : ""}<label for="${id}">${label}</label></div>
        <div class="flex min-w-0 flex-1 items-center gap-1 pl-[15px]">${value(id)}${o.bind ? `<span class="ml-auto flex pr-px">${select("绑定", "w-[77px]", "border-[#353535] bg-[#0f0f0f] text-[13px] indent-1.5")}</span>` : ""}</div>
        <div class="flex w-[56px] shrink-0 items-center border-l border-[#1a1a1a] pb-0.5 pl-7 text-[#6b6b6b]">${o.key ? icon("key", "size-5") : ""}</div>
      </div>`;
    };
    document.getElementById("details").innerHTML = [
      header("行为"),
      row("工具提示文本", id => box(id, "", "w-[187px]") + `<svg class="ml-1 h-[18px] w-[18px]" viewBox="0 0 18 18"><path d="M1 0v18" stroke="#777" stroke-width="1.500" /><path d="M4 1c3-2 5 2 8 2 2 0 3-1 5-1v12c-3 1-4 1-6 0s-5-1-7 0z" fill="#777" /></svg>`, { bind: true }),
      row("已启用", id => check(id, true), { bind: true, key: true }),
      row("可视性", id => select("非可命中测试（仅自身）", "w-[187px]", "border-[#353535] bg-[#0f0f0f] text-[13px] font-[Roboto,'Noto_Sans_CJK_TC']", id), { bind: true, key: true }),
      advanced(),
      header("可访问性"),
      row("重载可访问默认值", id => check(id, false)),
      row("可访问子项", id => check(id, true, true), { dim: true }),
      row("可访问行为", id => select("不可访问", "w-[97px]", "border-[#444] bg-[#383838] text-[13px] text-[#8a8a8a]", id), { dim: true }),
      advanced(),
      header("渲染变换"),
      row("变换", () => "", { arrow: true, key: true }),
      row("枢轴", id => box(id, "0.5", "w-[151px]") + box(id + "y", "0.5", "w-[151px]"), { arrow: true, key: true }),
      header("性能"),
      row("为易变", id => check(id, false)),
      header("渲染"),
      row("剪切", id => select("继承", "w-[155px]", "border-[#353535] bg-[#0f0f0f] text-[13px]", id), { key: true }),
      row("渲染不透明度", id => box(id, "1.0", "w-[155px]"), { key: true }),
      row("像素对齐", id => select("继承", "w-[155px]", "border-[#353535] bg-[#0f0f0f] text-[13px]", id), { key: true }),
      header("导航"),
      row("向左", id => select("Escape", "w-[104px]", "border-[#353535] bg-[#0f0f0f] text-[17px]", id)),
    ].join("");

    // Timeline cells, a quarter of a second each
    const cells = Array.from({ length: 24 }, (_, i) => (i - 2) * 0.25);
    document.querySelectorAll("[data-ticks]").forEach(bar => {
      const top = bar.nextElementSibling.hasAttribute("data-lines");
      bar.innerHTML = cells.map(t => `
        <div class="relative flex min-w-0 flex-1 items-center pl-[7px] text-[13px] leading-4 text-[#5c5c5c] ${top ? "h-4" : "h-[18px]"}"><i class="absolute left-0 ${top ? "bottom-0" : "top-0"} h-[11px] w-0.5 bg-[#8a8a8a]"></i>${t === 0 ? "" : t.toFixed(2)}</div>`).join("");
    });
    document.querySelector("[data-lines]").innerHTML = cells.map(() => `<div class="flex-1 border-l-2 border-[#1f1f1f]"></div>`).join("");

    // Transport buttons: label, width, path, dimmed
    const transport = [
      ["设置起点", 7, "M0 0l7 3-3 3v11l3 3-7 3z"],
      ["上一标记", 16, "M9 1v21L0 11.5zM11 1h2v21h-2zM14.500 1h2v21h-2z", true],
      ["上一关键帧", 26, "M12 1v21L0 11.500zM19.500 4.500l6 7-6 7-6-7zM19.500 8l-3 3.500 3 3.500 3-3.500z"],
      ["后退一帧", 17, "M9 1v21L0 11.5zM13 1h4v21h-4z", true],
      ["倒放", 20, "M20 0v23L0 11.500z"],
      ["播放", 20, "M0 0v23l20-11.500z"],
      ["前进一帧", 17, "M0 1h4v21H0zM7 1v21l10-10.500z", true],
      ["下一关键帧", 26, "M14 1v21l12-10.500zM6.500 4.500l6 7-6 7-6-7zM6.500 8l-3 3.500 3 3.500 3-3.500z"],
      ["结尾", 24, "M0 1h3v21H0zM6 1h3v21H6zM12 1v21l12-10.500z", true],
      ["设置终点", 7, "M7 0L0 3l3 3v11l-3 3 7 3z"],
      ["循环模式", 21, "M0 10h13V6l8 5.500-8 5.500v-4H0z"],
    ];
    document.getElementById("transport").innerHTML = transport.map(([name, w, path, dim]) => `
      <button class="${dim ? "text-[#555]" : ""}" aria-label="${name}"><svg class="h-[23px]" style="width:${w}px" viewBox="0 0 ${w} 23"><path d="${path}" fill="currentColor" fill-rule="evenodd" /></svg></button>`).join("");
  </script>
</body>
</html>
